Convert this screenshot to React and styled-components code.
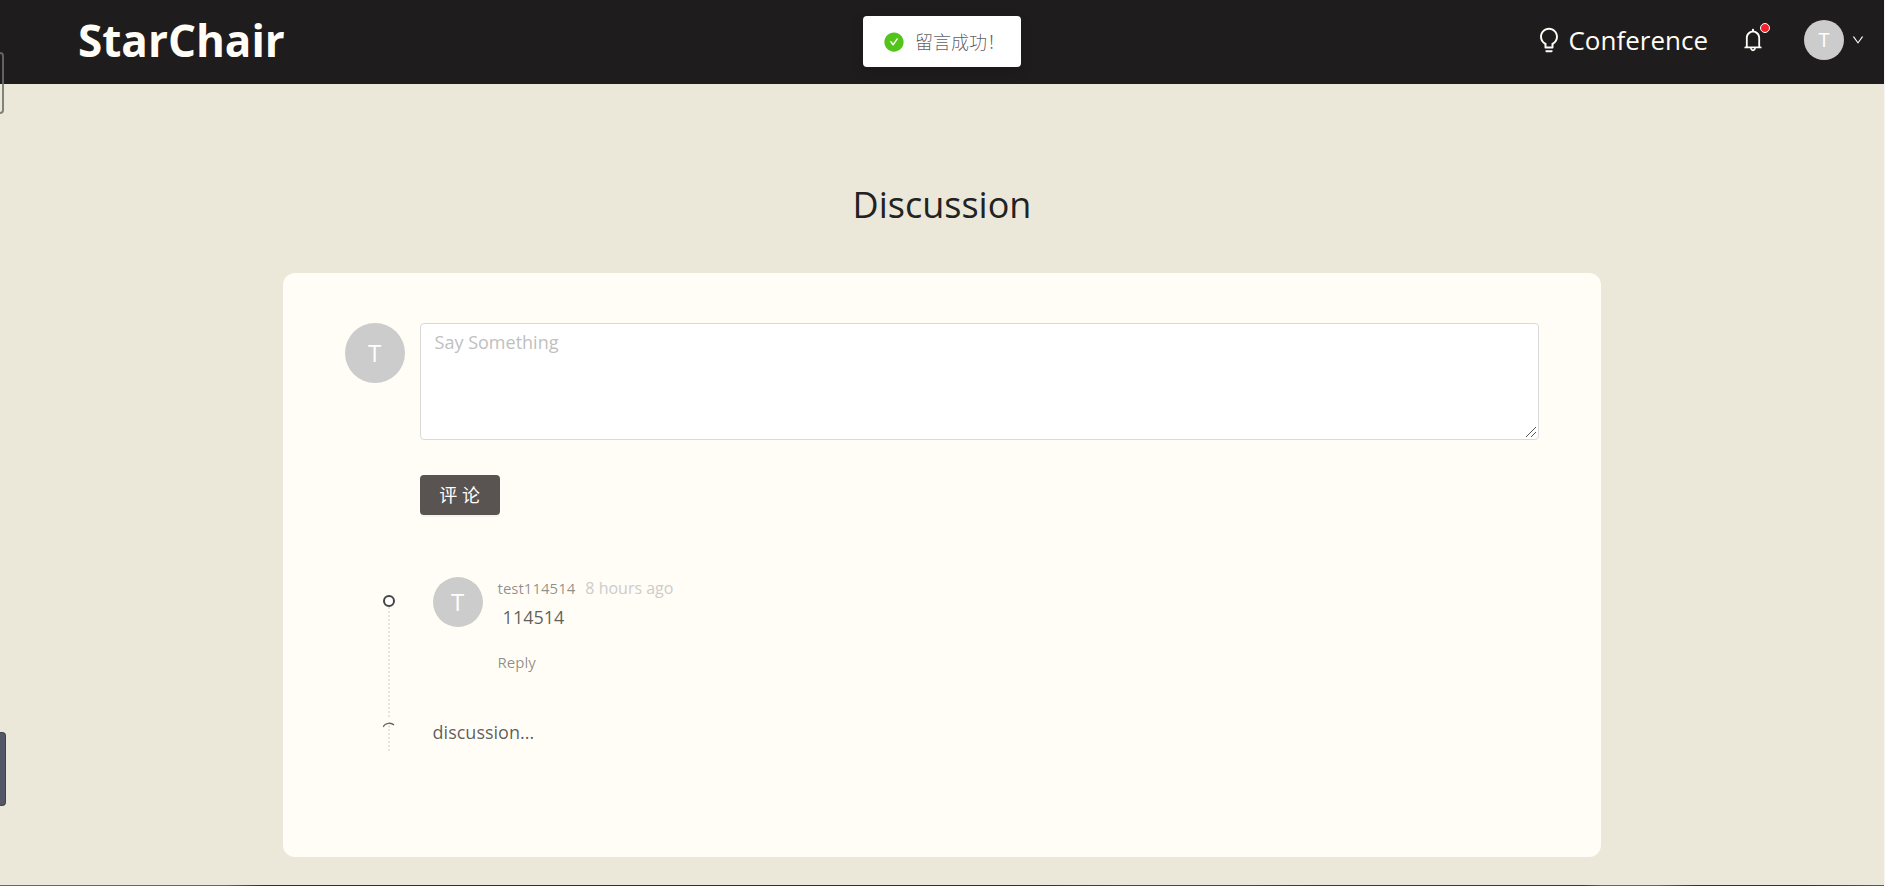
import React from "react";
import styled, { createGlobalStyle } from "styled-components";
import {
  AiFillCheckCircle,
  AiOutlineBell,
  AiOutlineBulb,
  AiOutlineDown,
} from "react-icons/ai";

const GlobalStyle = createGlobalStyle`
  *, *::before, *::after { box-sizing: border-box; }
  body {
    margin: 0;
    background: #ebe8da;
    color: rgba(0, 0, 0, 0.65);
    font-family: "Open Sans", "Noto Sans", "Noto Sans CJK SC", sans-serif;
    font-size: 18px;
    line-height: 28px;
  }
  button, textarea { font: inherit; }
`;

const Page = styled.div`
  position: relative;
  display: flex;
  flex-direction: column;
  min-height: 100vh;
  overflow: hidden;
  border-right: 1px solid #f4f4f4;
`;

const Header = styled.header`
  display: flex;
  align-items: center;
  justify-content: space-between;
  height: 84px;
  padding: 0 19px 4px 78px;
  background: #1f1c1d;
  color: #fffdf6;
`;

const Brand = styled.a`
  color: inherit;
  font-size: 44px;
  font-weight: 700;
  line-height: 64px;
  text-decoration: none;
`;

const Nav = styled.nav`
  display: flex;
  align-items: center;
`;

const NavLink = styled.a`
  display: flex;
  align-items: center;
  gap: 5px;
  margin-right: 32px;
  color: inherit;
  font-size: 26px;
  line-height: 40px;
  text-decoration: none;
`;

const IconButton = styled.button`
  position: relative;
  display: flex;
  margin-right: 38px;
  padding: 0;
  border: 0;
  background: none;
  color: inherit;
`;

const Dot = styled.span`
  position: absolute;
  top: -4px;
  right: -4px;
  width: 10px;
  height: 10px;
  border: 1px solid #fff;
  border-radius: 50%;
  background: #f5222d;
`;

const AccountButton = styled.button`
  display: flex;
  align-items: center;
  gap: 7px;
  padding: 0;
  border: 0;
  background: none;
  color: inherit;
`;

const Avatar = styled.span`
  display: flex;
  flex: none;
  align-items: center;
  justify-content: center;
  width: ${(p) => p.$size}px;
  height: ${(p) => p.$size}px;
  border-radius: 50%;
  background: #ccc;
  color: #fff;
  font-size: ${(p) => (p.$size > 40 ? 24 : 20)}px;
`;

const Toast = styled.div`
  position: absolute;
  top: 16px;
  left: 50%;
  display: flex;
  align-items: center;
  gap: 10px;
  height: 51px;
  padding: 0 16px 0 20px;
  border-radius: 4px;
  background: #fff;
  box-shadow: 0 4px 12px rgba(0, 0, 0, 0.15);
  font-size: 18px;
  font-weight: 300;
  white-space: nowrap;
  transform: translateX(-50%);

  svg { color: #52c41a; }
`;

const Main = styled.main`
  display: flex;
  flex: 1;
  flex-direction: column;
  align-items: center;
  padding: 92px 0 28px;
`;

const Title = styled.h1`
  margin: 0 0 39px;
  color: #222;
  font-size: 36px;
  font-weight: 400;
  line-height: 58px;
`;

const Card = styled.section`
  width: 70%;
  flex: 1;
  padding: 50px 62px;
  border-radius: 12px;
  background: #fffdf6;
`;

const Composer = styled.form`
  display: flex;
  gap: 15px;
`;

const Fields = styled.div`
  display: flex;
  flex: 1;
  flex-direction: column;
  align-items: flex-start;
  gap: 35px;
`;

const TextBox = styled.textarea`
  width: 100%;
  height: 117px;
  padding: 4px 14px;
  border: 1px solid #d9d9d9;
  border-radius: 4px;
  background: #fff;
  resize: vertical;

  &::placeholder { color: #bfbfbf; }

  &::-webkit-resizer {
    background: linear-gradient(
        135deg,
        transparent 47%,
        #555 47% 53%,
        transparent 53% 72%,
        #555 72% 78%,
        transparent 78%
      )
      3px 3px / 10px 10px no-repeat;
  }
`;

const SubmitButton = styled.button`
  display: flex;
  align-items: center;
  justify-content: center;
  width: 80px;
  height: 40px;
  padding: 0;
  border: 0;
  border-radius: 4px;
  background: #595351;
  box-shadow: 0 2px 0 rgba(0, 0, 0, 0.04);
  color: #fff;
  white-space: pre;
`;

const Timeline = styled.ul`
  margin: 62px 0 0 38px;
  padding: 0;
  list-style: none;
`;

const Entry = styled.li`
  display: flex;
  gap: 38px;
`;

const Rail = styled.div`
  display: flex;
  flex-direction: column;
  align-items: center;
  width: 12px;
  padding-top: ${(p) => (p.$pending ? 0 : 18)}px;
`;

const Marker = styled.span`
  width: 12px;
  height: 12px;
  border: 2px solid #444;
  border-radius: 50%;
  background: #fff;
`;

const Line = styled.span`
  flex: 1;
  border-left: 2px dotted #e4e4e4;
`;

const Comment = styled.article`
  display: flex;
  gap: 15px;
  padding-bottom: 42px;
`;

const Meta = styled.header`
  display: flex;
  gap: 10px;
  color: rgba(0, 0, 0, 0.45);
  font-size: 15px;
  line-height: 22px;

  time {
    color: #ccc;
    font-size: 16px;
  }
`;

const Message = styled.p`
  margin: 4px 0 18px 5px;
`;

const ReplyButton = styled.button`
  display: block;
  padding: 0;
  border: 0;
  background: none;
  color: rgba(0, 0, 0, 0.45);
  font-size: 15px;
  line-height: 26px;
`;

const Pending = styled.p`
  margin: 0;
  padding: 1px 0 5px;
`;

const EdgeHandle = styled.span`
  position: absolute;
  top: 52px;
  left: 0;
  width: 4px;
  height: 62px;
  border: 2px solid rgba(110, 112, 108, 0.85);
  border-left: 0;
  border-radius: 0 5px 5px 0;
`;

const EdgeTab = styled.span`
  position: absolute;
  top: 732px;
  left: 0;
  width: 6px;
  height: 74px;
  border: 1px solid #40424c;
  border-left: 0;
  border-radius: 0 4px 4px 0;
  background: #535766;
`;

const BottomEdge = styled.div`
  height: 1px;
  background: linear-gradient(
    90deg,
    #6b6460 0 12%,
    #2b3135 14% 54%,
    #4a453f 60% 66%,
    #33393c 70% 84%,
    #6b655c 85% 88%,
    #2c343c 90% 96%,
    #5e5a66
  );
`;

export default function App() {
  return (
    <>
      <GlobalStyle />
      <Page>
        <Header>
          <Brand href="#">StarChair</Brand>
          <Nav>
            <NavLink href="#conference">
              <AiOutlineBulb size={28} />
              Conference
            </NavLink>
            <IconButton type="button" aria-label="Notifications">
              <AiOutlineBell size={26} />
              <Dot />
            </IconButton>
            <AccountButton type="button" aria-label="Account">
              <Avatar $size={40}>T</Avatar>
              <AiOutlineDown size={14} />
            </AccountButton>
          </Nav>
        </Header>
        <Main>
          <Title>Discussion</Title>
          <Card>
            <Composer onSubmit={(e) => e.preventDefault()}>
              <Avatar $size={60}>T</Avatar>
              <Fields>
                <TextBox aria-label="Say Something" placeholder="Say Something" />
                <SubmitButton type="submit">评 论</SubmitButton>
              </Fields>
            </Composer>
            <Timeline>
              <Entry>
                <Rail>
                  <Marker />
                  <Line />
                </Rail>
                <Comment>
                  <Avatar $size={50}>T</Avatar>
                  <div>
                    <Meta>
                      <span>test114514</span>
                      <time>8 hours ago</time>
                    </Meta>
                    <Message>114514</Message>
                    <ReplyButton type="button">Reply</ReplyButton>
                  </div>
                </Comment>
              </Entry>
              <Entry>
                <Rail $pending>
                  <svg width="12" height="12" viewBox="0 0 12 12" fill="none" stroke="#666">
                    <path d="M0 10C2 6 8 5 11 8" strokeWidth="1.4" />
                    <path d="M6 8.500V12" stroke="#e4e4e4" strokeWidth="2" strokeDasharray="2 2" />
                  </svg>
                  <Line />
                </Rail>
                <Pending>discussion...</Pending>
              </Entry>
            </Timeline>
          </Card>
        </Main>
        <BottomEdge />
        <Toast role="status">
          <AiFillCheckCircle size={22} />
          留言成功！
        </Toast>
        <EdgeHandle />
        <EdgeTab />
      </Page>
    </>
  );
}
